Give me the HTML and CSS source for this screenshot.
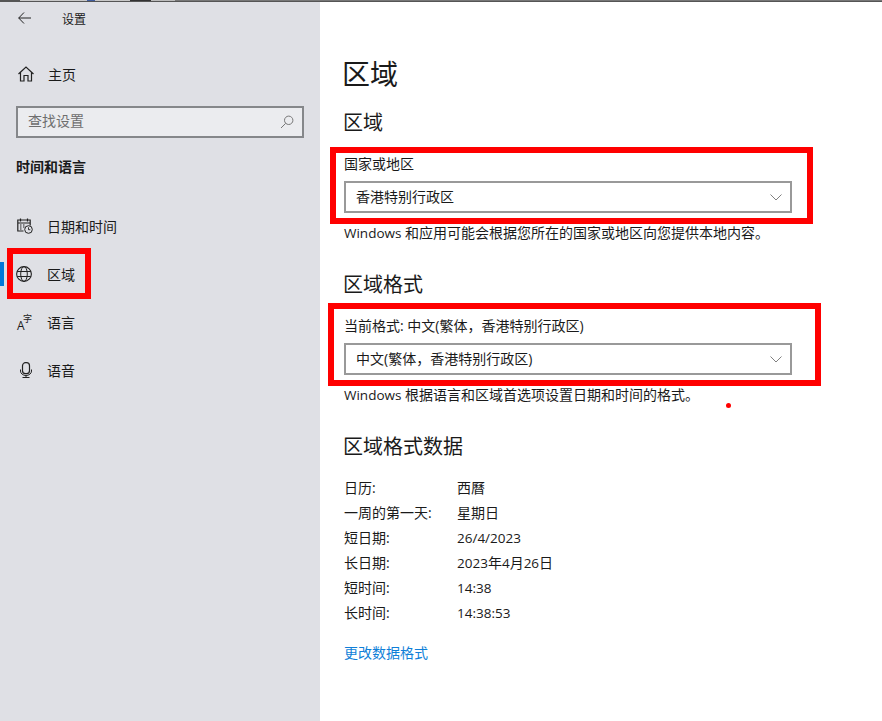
FILE: index.html
```html
<!DOCTYPE html>
<html lang="zh-CN">
<head>
<meta charset="utf-8">
<title>设置</title>
<link rel="stylesheet" href="styles.css">
</head>
<body>
<div class="topline"></div>
<div class="app">
  <aside class="side">
    <div class="titlebar">
      <svg class="back" viewBox="0 0 13 12"><path d="M6 .5.7 6l5.300 5.500M.7 6H13" fill="none" stroke="#222" stroke-width="1"/></svg>
      <span class="title">设置</span>
    </div>
    <div class="nav-home">
      <svg class="ico" viewBox="0 0 16 16"><path d="M.5 8 8 1l7.500 7M2.500 6.500V15H6V9.500h4V15h3.500V6.500" fill="none" stroke="#222" stroke-width="1.200"/></svg>
      <span>主页</span>
    </div>
    <div class="search">
      <span class="search-text">查找设置</span>
      <svg class="search-ico" viewBox="0 0 14 14"><circle cx="8.700" cy="5.300" r="4.200" fill="none" stroke="#777" stroke-width="1"/><path d="M5.700 8.300 1 13" fill="none" stroke="#777" stroke-width="1"/></svg>
    </div>
    <div class="group">时间和语言</div>
    <nav class="nav">
      <div class="item">
        <svg class="ico ico-cal" viewBox="0 0 16 16"><path d="M6.500 13H.8V2h12.400v5.500M.8 5h12.400M3.500 .5v3M10.500 .5v3" fill="none" stroke="#222" stroke-width="1.200"/><path d="M3 7h1.500M6 7h1.500M3 9h1.500M6 9h1.500M3 11h1.500" fill="none" stroke="#222" stroke-width="1.200"/><circle cx="11.500" cy="11.500" r="3.800" fill="#dfe0e5" stroke="#222"/><path d="M11.500 9.300v2.400h1.800" fill="none" stroke="#222" stroke-width=".9"/></svg>
        <span>日期和时间</span>
      </div>
      <div class="item active">
        <svg class="ico globe" viewBox="0 0 16 16"><circle cx="8" cy="8" r="7.400" fill="none" stroke="#222" stroke-width="1.100"/><ellipse cx="8" cy="8" rx="3.300" ry="7.400" fill="none" stroke="#222"/><path d="M1.200 5.500h13.600M1.200 10.500h13.600" fill="none" stroke="#222"/></svg>
        <span>区域</span>
      </div>
      <div class="item">
        <span class="ico lang"><span class="lang-a">A</span><span class="lang-z">字</span></span>
        <span>语言</span>
      </div>
      <div class="item">
        <svg class="ico" viewBox="0 0 16 16"><rect x="4.500" y=".7" width="7" height="11" rx="3" fill="none" stroke="#222" stroke-width="1.200"/><path d="M2.500 7.500v1.500a5.500 4.500 0 0 0 11 0V7.500M8 13.500v2M4.500 15.500h7" fill="none" stroke="#222"/></svg>
        <span>语音</span>
      </div>
    </nav>
  </aside>
  <main class="main">
    <h1>区域</h1>
    <h2 class="h-first">区域</h2>
    <div class="label">国家或地区</div>
    <div class="select"><span>香港特别行政区</span><svg class="chev" viewBox="0 0 12 7"><path d="M.5.5 6 6l5.500-5.500" fill="none" stroke="#808080"/></svg></div>
    <p class="note"><span class="lat">Windows</span> 和应用可能会根据您所在的国家或地区向您提供本地内容。</p>
    <h2 class="h-next">区域格式</h2>
    <div class="label">当前格式: 中文(繁体，香港特别行政区)</div>
    <div class="select"><span>中文(繁体，香港特别行政区)</span><svg class="chev" viewBox="0 0 12 7"><path d="M.5.5 6 6l5.500-5.500" fill="none" stroke="#808080"/></svg></div>
    <p class="note"><span class="lat">Windows</span> 根据语言和区域首选项设置日期和时间的格式。</p>
    <h2 class="h-next">区域格式数据</h2>
    <dl class="data">
      <dt>日历:</dt><dd>西曆</dd>
      <dt>一周的第一天:</dt><dd>星期日</dd>
      <dt>短日期:</dt><dd class="lat num">26/4/2023</dd>
      <dt>长日期:</dt><dd class="lat">2023<span class="cjk">年</span>4<span class="cjk">月</span>26<span class="cjk">日</span></dd>
      <dt>短时间:</dt><dd class="lat num">14:38</dd>
      <dt>长时间:</dt><dd class="lat num">14:38:53</dd>
    </dl>
    <a class="link" href="#">更改数据格式</a>
  </main>
</div>
<div class="mark mark-nav"></div>
<div class="mark mark-country"></div>
<div class="mark mark-format"></div>
<div class="dot"></div>
</body>
</html>
```

FILE: styles.css
```css
* { box-sizing: border-box; }
html, body { margin: 0; height: 100%; }
body {
  position: relative;
  width: 882px;
  height: 721px;
  overflow: hidden;
  font-family: "Open Sans", "Noto Sans CJK SC", sans-serif;
  font-size: 14px;
  color: #1a1a1a;
  background: #fff;
}
.topline {
  height: 2px;
  background:
    linear-gradient(90deg, #555 0 20px, #c8c8c8 20px 87px, #3f5c9e 87px 95px, #c8c8c8 95px 130px, #333 130px 151px, #bbb 151px 175px, #777 175px) top / 100% 1px no-repeat,
    #555;
}
.app { display: flex; height: 719px; }
.side { width: 320px; background: #dfe0e5; padding: 0 16px; flex: none; }
.titlebar { display: flex; align-items: center; height: 34px; }
.back { width: 13px; height: 12px; margin-left: 2px; margin-top: -2px; }
.title { margin-left: 31px; font-size: 12px; }
.nav-home { display: flex; align-items: center; height: 20px; margin-top: 28px; }
.ico { width: 16px; height: 16px; margin-left: 2px; flex: none; }
.nav-home span { margin-left: 14px; }
.search {
  display: flex; align-items: center; justify-content: space-between;
  height: 32px; margin-top: 22px; width: 288px;
  border: 2px solid #85878a; background: #ebecef; padding: 0 8px 4px 10px;
}
.search-text { color: #6e6e6e; }
.search-ico { width: 14px; height: 14px; margin-top: 4px; }
.group { font-weight: 700; margin-top: 19px; line-height: 20px; }
.nav { margin-top: 25px; }
.item { position: relative; display: flex; align-items: center; height: 48px; }
.item > span:last-child { margin-left: 13px; }
.active::before { content: ""; position: absolute; left: -16px; top: 12px; width: 4px; height: 24px; background: #0078d7; }
.ico-cal { margin-left: 1px; margin-right: 1px; }
.globe { margin-left: 0; margin-right: 2px; }
.lang { position: relative; display: block; margin-left: 1px; margin-right: 1px; }
.lang-a { position: absolute; left: 0; top: 5px; font-size: 12px; line-height: 13px; }
.lang-z { position: absolute; left: 6px; top: 0; font-size: 9px; line-height: 10px; }
.main { flex: 1; padding: 0 0 0 24px; }
h1 { margin: 52px 0 0 -2px; font-size: 28px; line-height: 40px; font-weight: 400; }
h2 { margin: 0 0 0 -1px; font-size: 20px; line-height: 28px; font-weight: 400; }
.h-first { margin-top: 15px; }
.label { margin-top: 18px; line-height: 18px; height: 18px; }
.select {
  display: flex; align-items: center; justify-content: space-between;
  width: 448px; height: 32px; margin-top: 8px;
  border: 2px solid #999; padding: 0 8px 2px 10px;
}
.chev { width: 12px; height: 7px; margin-top: 2px; }
.note { margin: 10px 0 0; line-height: 20px; }
.lat { font-size: 13.5px; }
.cjk { font-size: 14px; }
.h-next { margin-top: 28px; }
.data { display: grid; grid-template-columns: 113px 1fr; grid-auto-rows: 25px; margin: 14px 0 0; line-height: 25px; }
.data dd { margin: 0; }
.data .num { padding-top: 1px; }
.link { display: block; margin-top: 18px; line-height: 20px; color: #0f7fd8; text-decoration: none; }
.mark { position: absolute; border: 6px solid #f00; }
.mark-nav { left: 7px; top: 248px; width: 84px; height: 51px; }
.mark-country { left: 330px; top: 147px; width: 483px; height: 77px; }
.mark-format { left: 328px; top: 303px; width: 493px; height: 83px; }
.dot { position: absolute; left: 726px; top: 403px; width: 5px; height: 5px; border-radius: 50%; background: #f00; }
```
